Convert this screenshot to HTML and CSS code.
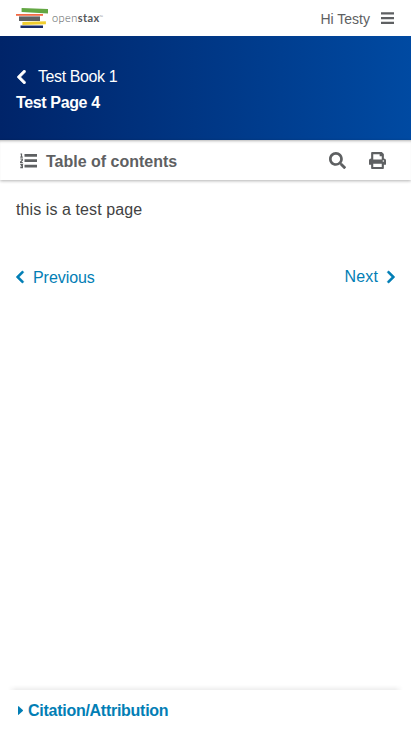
FILE: index.html
```html
<!DOCTYPE html>
<html lang="en">
<head>
<meta charset="utf-8">
<title>Test Page 4</title>
<link rel="stylesheet" href="styles.css">
</head>
<body>
<header class="nav">
  <a class="logo">
    <svg class="books" viewBox="0 0 33 20"><path fill="#63a744" d="M5.6 0 32 1.1V5.4L5.6 3.9z"/><path fill="#f36b46" d="M0 6h27v1.8H0z"/><path fill="#5f6163" d="M3 8.4h21v4.6H3z"/><path fill="#f0cd2f" d="m6.4 14 23.5-.8v3l-23.5.8z"/><path fill="#182b69" d="M4.5 17.5H27V20H4.5z"/></svg>
    <span class="wordmark">open<b>stax</b><i>™</i></span>
  </a>
  <div class="user"><span class="greeting">Hi Testy</span>
    <svg class="burger" viewBox="0 0 13 13"><path fill="#5e6062" d="M0 .2h13v2.2H0zM0 5h13v2.2H0zM0 9.8h13V12H0z"/></svg>
  </div>
</header>
<div class="bookbar">
  <a class="book"><svg class="chev-book" viewBox="30 38 260 436"><path fill="currentColor" stroke="currentColor" stroke-width="20" d="M34.52 239.03L228.87 44.69c9.37-9.37 24.57-9.37 33.94 0l22.67 22.67c9.36 9.36 9.37 24.52.04 33.9L131.49 256l154.02 154.75c9.34 9.38 9.32 24.54-.04 33.9l-22.67 22.67c-9.37 9.37-24.57 9.37-33.94 0L34.52 272.97c-9.37-9.37-9.37-24.57 0-33.94z"/></svg><span class="book-title">Test Book 1</span></a>
  <h1 class="page-title">Test Page 4</h1>
</div>
<div class="toolbar">
  <button class="toc"><svg class="list" viewBox="0 0 17 16"><path fill="currentColor" d="M4.5 1H17v2.8H4.5zM4.5 6.3H17v2.8H4.5zM4.5 11.7H17v2.8H4.5z"/><path fill="none" stroke="currentColor" stroke-width="1.2" d="M.5 1h1v3M.3 4.1h2.5M.3 6h2v1.2L.6 9v.5h2.2M.3 11.4h2.1l-1 1.4h1v1.8H.3"/></svg><span>Table of contents</span></button>
  <div class="tools">
    <svg class="tool" viewBox="0 0 512 512"><path fill="currentColor" d="M505 442.7L405.3 343c-4.5-4.5-10.6-7-17-7H372c27.6-35.3 44-79.7 44-128C416 93.1 322.9 0 208 0S0 93.1 0 208s93.1 208 208 208c48.3 0 92.7-16.4 128-44v16.3c0 6.4 2.5 12.5 7 17l99.7 99.7c9.4 9.4 24.6 9.4 33.9 0l28.3-28.3c9.4-9.4 9.4-24.6.1-34zM208 336c-70.7 0-128-57.2-128-128 0-70.7 57.2-128 128-128 70.7 0 128 57.2 128 128 0 70.7-57.2 128-128 128z"/></svg>
    <svg class="tool" viewBox="0 0 512 512"><path fill="currentColor" fill-rule="evenodd" d="M448 192V77.25c0-8.49-3.37-16.62-9.37-22.63L393.37 9.37c-6-6-14.14-9.37-22.63-9.37H96C78.33 0 64 14.33 64 32v160c-35.35 0-64 28.65-64 64v112c0 8.84 7.16 16 16 16h48v96c0 17.67 14.33 32 32 32h320c17.67 0 32-14.33 32-32v-96h48c8.84 0 16-7.16 16-16V256c0-35.35-28.65-64-64-64zm-64 256H128v-96h256v96zm0-224H128V64h192v48c0 8.84 7.16 16 16 16h48v96zm48 72a24 24 0 1 1 0-48 24 24 0 0 1 0 48z"/></svg>
  </div>
</div>
<main class="content"><p>this is a test page</p></main>
<nav class="pager">
  <a class="prev"><svg class="chev" viewBox="30 38 260 436"><path fill="currentColor" stroke="currentColor" stroke-width="20" d="M34.52 239.03L228.87 44.69c9.37-9.37 24.57-9.37 33.94 0l22.67 22.67c9.36 9.36 9.37 24.52.04 33.9L131.49 256l154.02 154.75c9.34 9.38 9.32 24.54-.04 33.9l-22.67 22.67c-9.37 9.37-24.57 9.37-33.94 0L34.52 272.97c-9.37-9.37-9.37-24.57 0-33.94z"/></svg><span>Previous</span></a>
  <a class="next"><span>Next</span><svg class="chev flip" viewBox="30 38 260 436"><path fill="currentColor" stroke="currentColor" stroke-width="20" d="M34.52 239.03L228.87 44.69c9.37-9.37 24.57-9.37 33.94 0l22.67 22.67c9.36 9.36 9.37 24.52.04 33.9L131.49 256l154.02 154.75c9.34 9.38 9.32 24.54-.04 33.9l-22.67 22.67c-9.37 9.37-24.57 9.37-33.94 0L34.52 272.97c-9.37-9.37-9.37-24.57 0-33.94z"/></svg></a>
</nav>
<footer class="citation"><svg class="caret" viewBox="0 0 5 9"><path fill="currentColor" d="M0 .4Q0-.2.6.2L4.8 4q.4.5 0 1L.6 8.8Q0 9.2 0 8.6z"/></svg><span>Citation/Attribution</span></footer>
</body>
</html>
```
FILE: styles.css
```css
* { box-sizing: border-box; }
body {
  margin: 0;
  height: 731px;
  display: flex;
  flex-direction: column;
  overflow: hidden;
  background: #fff;
  color: #424242;
  font: 16px/24px "Liberation Sans", Arial, sans-serif;
}
svg { display: block; flex: none; }
.nav {
  height: 36px;
  flex: none;
  display: flex;
  justify-content: space-between;
  padding: 0 17px 0 16px;
}
.logo { display: flex; }
.books { width: 33px; height: 20px; margin-top: 8px; }
.wordmark {
  margin: 9px 0 0 3px;
  font: 300 11px/18px Lato, sans-serif;
  letter-spacing: .42px;
  color: #55575a;
}
.wordmark b { font-weight: 700; }
.wordmark i { font-size: 5px; font-style: normal; vertical-align: 3px; line-height: 1; letter-spacing: 0; }
.user { display: flex; color: #5e6062; }
.greeting { font-size: 14px; line-height: 20px; margin-top: 9px; }
.burger { width: 13px; height: 13px; margin: 12px 0 0 11px; }
.bookbar {
  height: 104px;
  flex: none;
  padding: 28px 16px 0;
  color: #fff;
  background: linear-gradient(to right, #002469, #004aa2);
}
.book { display: flex; height: 26px; line-height: 26px; }
.book-title { letter-spacing: -.4px; }
.chev-book { width: 9px; height: 14px; margin: 6px 12px 0 1px; }
.page-title { margin: 0; font-size: 16px; line-height: 26px; letter-spacing: -.36px; }
.toolbar {
  position: relative;
  height: 40px;
  flex: none;
  display: flex;
  justify-content: space-between;
  padding: 0 25px 0 20px;
  color: #5e6062;
  box-shadow: 0 1px 3px rgba(0, 0, 0, .3), inset 0 3px 3px -2px rgba(0, 0, 0, .3);
}
.toc {
  display: flex;
  align-items: center;
  padding: 3px 0 0;
  border: 0;
  background: none;
  color: inherit;
  font: bold 16px/24px "Liberation Sans", Arial, sans-serif;
}
.list { width: 17px; height: 16px; margin: -2px 9px 0 0; }
.toc span { padding-top: 1px; }
.tools { display: flex; gap: 23px; padding-top: 12px; }
.tool { width: 17px; height: 17px; }
.content { padding: 17px 16px 0; }
.content p { margin: 0; line-height: 26px; letter-spacing: .09px; }
.pager {
  display: flex;
  justify-content: space-between;
  padding: 41px 16px 0;
  color: #027eb5;
}
.prev, .next { display: flex; line-height: 26px; }
.prev span { margin: 1px 0 0 10px; letter-spacing: -.06px; }
.next span { margin-right: 9px; letter-spacing: .12px; }
.chev { width: 8px; height: 12px; margin-top: 7px; overflow: visible; }
.prev .chev { margin-right: -1px; }
.flip { transform: scaleX(-1); }
.citation {
  position: relative;
  height: 41px;
  margin-top: auto;
  display: flex;
  padding: 9px 18px 0;
  background: #fff;
  color: #027eb5;
  font-weight: bold;
  letter-spacing: -.27px;
}
.citation::before {
  content: "";
  position: absolute;
  inset: -5px 8px auto;
  height: 5px;
  background: linear-gradient(rgba(0, 0, 0, 0), rgba(0, 0, 0, .065));
  mask-image: linear-gradient(to right, transparent, #000 8px, #000 calc(100% - 8px), transparent);
}
.caret { width: 5px; height: 9px; margin: 7px 5px 0 0; }
```
